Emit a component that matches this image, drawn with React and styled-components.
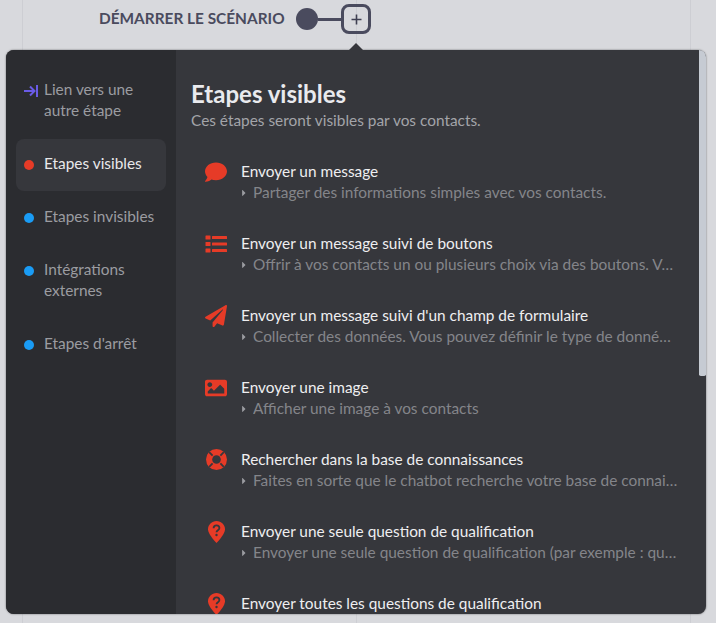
import React from 'react';
import styled, { createGlobalStyle } from 'styled-components';
import { FaComment, FaPaperPlane, FaImage, FaCaretRight } from 'react-icons/fa';

const GlobalStyle = createGlobalStyle`
  html, body {
    margin: 0;
    height: 623px;
    overflow: hidden;
  }
  body {
    font-family: "Lato", "Noto Sans", sans-serif;
    background-color: #d8d9dd;
    background-image: linear-gradient(90deg, #cdced3 1px, transparent 1px);
    background-size: 334px 100%;
    background-position: 22px 0;
  }
`;

const Page = styled.div`
  height: 623px;
  display: flex;
  flex-direction: column;
  padding: 4px 10px 9px 6px;
  box-sizing: border-box;
`;

const StartBar = styled.div`
  display: flex;
  align-items: center;
  height: 30px;
  padding-left: 93px;
  margin-bottom: 16px;
`;

const StartLabel = styled.span`
  width: 190px;
  font-size: 15.4px;
  font-weight: 700;
  color: #4a4b5e;
  white-space: nowrap;
  position: relative;
  top: -1px;
`;

const StartDot = styled.span`
  width: 22px;
  height: 22px;
  border-radius: 50%;
  background: #4a4b5e;
  margin-left: 7px;
`;

const Connector = styled.span`
  width: 23px;
  height: 3px;
  background: #4a4b5e;
`;

const AddButton = styled.span`
  width: 30px;
  height: 30px;
  box-sizing: border-box;
  border: 3px solid #4a4b5e;
  border-radius: 8px;
  display: flex;
  align-items: center;
  justify-content: center;
  color: #3f4052;
`;

const Panel = styled.div`
  position: relative;
  flex: 1;
  min-height: 0;
  display: flex;
  border-radius: 8px;
  background: #36373c;
  box-shadow: 0 0 2px rgba(0, 0, 0, 0.55);
`;

const Caret = styled.span`
  position: absolute;
  left: 343px;
  top: -7px;
  width: 0;
  height: 0;
  border-left: 7px solid transparent;
  border-right: 7px solid transparent;
  border-bottom: 7px solid #36373c;
`;

const Sidebar = styled.nav`
  width: 170px;
  flex: none;
  box-sizing: border-box;
  padding: 15px 10px;
  display: flex;
  flex-direction: column;
  gap: 1px;
  background: #2b2c30;
  border-radius: 8px 0 0 8px;
`;

const SideItem = styled.div`
  display: flex;
  align-items: flex-start;
  padding: 14px 8px 17px;
  border-radius: 8px;
  font-size: 15.4px;
  line-height: 21px;
  color: ${(props) => (props.$active ? '#e8e8ea' : '#9b9ca1')};
  background: ${(props) => (props.$active ? '#36373c' : 'transparent')};
`;

const SideMark = styled.span`
  width: 20px;
  height: 21px;
  flex: none;
  display: flex;
  align-items: center;
  position: relative;
  top: 1px;
`;

const Dot = styled.span`
  width: 10px;
  height: 10px;
  border-radius: 50%;
  background: ${(props) => props.$color};
`;

const Content = styled.main`
  flex: 1;
  min-width: 0;
  padding: 29px 28px 0 15px;
  overflow: hidden;
  border-radius: 0 8px 8px 0;
`;

const Title = styled.h1`
  margin: 0;
  font-size: 24px;
  line-height: 30px;
  font-weight: 700;
  color: #e9eaee;
`;

const Subtitle = styled.p`
  margin: 1px 0 30px;
  font-size: 15.4px;
  line-height: 21px;
  color: #a3a4a9;
`;

const StepList = styled.div`
  display: flex;
  flex-direction: column;
  gap: 30px;
  padding-left: 14px;
`;

const Step = styled.div`
  display: flex;
  gap: 14px;
`;

const StepIcon = styled.span`
  width: 22px;
  height: 21px;
  flex: none;
  display: flex;
  align-items: center;
  justify-content: center;
  color: #e63b27;
`;

const StepText = styled.div`
  flex: 1;
  min-width: 0;
`;

const StepName = styled.div`
  font-size: 15.4px;
  line-height: 21px;
  color: #eeeef0;
  white-space: nowrap;
`;

const StepHint = styled.div`
  display: flex;
  align-items: center;
  font-size: 15.4px;
  line-height: 21px;
  color: #84858a;
`;

const HintArrow = styled(FaCaretRight)`
  width: 6px;
  height: 10px;
  flex: none;
  margin-right: 6px;
  color: #9b9ca1;
`;

const HintLabel = styled.span`
  white-space: nowrap;
  overflow: hidden;
  text-overflow: ellipsis;
`;

const ScrollThumb = styled.span`
  position: absolute;
  top: 0;
  right: 0;
  width: 7px;
  height: 326px;
  background: #c6cbd3;
  border-radius: 0 8px 2px 2px;
`;

const PlusIcon = () => (
  <svg width="11" height="11" viewBox="0 0 11 11">
    <path d="M5.500 0.500v10M0.500 5.500h10" stroke="currentColor" strokeWidth="1.600" />
  </svg>
);

const LinkIcon = () => (
  <svg width="14" height="12" viewBox="0 0 14 12" fill="none" stroke="#6a5be6" strokeWidth="2">
    <path d="M0 6h10M6 1.500 10.500 6 6 10.500" />
    <path d="M13 0v12" />
  </svg>
);

const ListIcon = () => (
  <svg width="22" height="18" viewBox="0 0 22 18" fill="currentColor">
    <rect x="0.500" y="0.500" width="5" height="4" rx="0.500" />
    <rect x="0.500" y="7" width="5" height="4" rx="0.500" />
    <rect x="0.500" y="13.500" width="5" height="4" rx="0.500" />
    <rect x="7" y="1" width="15" height="3" rx="0.500" />
    <rect x="7" y="7.500" width="15" height="3" rx="0.500" />
    <rect x="7" y="14" width="15" height="3" rx="0.500" />
  </svg>
);

const RingIcon = () => (
  <svg width="21" height="21" viewBox="0 0 21 21">
    <circle cx="10.500" cy="10.500" r="10.500" fill="currentColor" />
    <circle cx="10.500" cy="10.500" r="4.300" fill="#36373c" />
    <path
      d="M3.200 3.200l3.400 3.400M17.800 3.200l-3.400 3.400M3.200 17.800l3.400-3.400M17.800 17.800l-3.400-3.400"
      stroke="#36373c"
      strokeWidth="1.800"
    />
  </svg>
);

const QuestionPin = () => (
  <svg width="17" height="22" viewBox="0 0 17 22">
    <path
      d="M8.500 0C3.800 0 0 3.700 0 8.200c0 4.400 5.600 10.600 8.500 13.800 2.900-3.200 8.500-9.400 8.500-13.800C17 3.700 13.200 0 8.500 0z"
      fill="#e63b27"
    />
    <path
      d="M5.600 7.200c0-1.700 1.300-2.800 2.900-2.800s2.900 1 2.900 2.600c0 2.100-2.900 2.200-2.900 4.200"
      fill="none"
      stroke="#36373c"
      strokeWidth="1.800"
    />
    <circle cx="8.500" cy="14" r="1.200" fill="#36373c" />
  </svg>
);

const sideItems = [
  { label: <>Lien vers une<br />autre étape</>, mark: <LinkIcon /> },
  { label: 'Etapes visibles', mark: <Dot $color="#e63b27" />, active: true },
  { label: 'Etapes invisibles', mark: <Dot $color="#1a9cf5" /> },
  { label: <>Intégrations<br />externes</>, mark: <Dot $color="#1a9cf5" /> },
  { label: "Etapes d'arrêt", mark: <Dot $color="#1a9cf5" /> },
];

const steps = [
  {
    icon: <FaComment size={22} />,
    name: 'Envoyer un message',
    hint: 'Partager des informations simples avec vos contacts.',
  },
  {
    icon: <ListIcon />,
    name: 'Envoyer un message suivi de boutons',
    hint: 'Offrir à vos contacts un ou plusieurs choix via des boutons. Vous pouvez ajouter plusieurs boutons',
  },
  {
    icon: <FaPaperPlane size={22} />,
    name: "Envoyer un message suivi d'un champ de formulaire",
    hint: 'Collecter des données. Vous pouvez définir le type de données à collecter dans le formulaire',
  },
  {
    icon: <FaImage size={22} />,
    name: 'Envoyer une image',
    hint: 'Afficher une image à vos contacts',
  },
  {
    icon: <RingIcon />,
    name: 'Rechercher dans la base de connaissances',
    hint: 'Faites en sorte que le chatbot recherche votre base de connaissances pour répondre',
  },
  {
    icon: <QuestionPin />,
    name: 'Envoyer une seule question de qualification',
    hint: 'Envoyer une seule question de qualification (par exemple : quel est votre budget ?)',
  },
  {
    icon: <QuestionPin />,
    name: 'Envoyer toutes les questions de qualification',
    hint: 'Envoyer toutes les questions de qualification à vos contacts',
  },
];

export default function App() {
  return (
    <Page>
      <GlobalStyle />
      <StartBar>
        <StartLabel>DÉMARRER LE SCÉNARIO</StartLabel>
        <StartDot />
        <Connector />
        <AddButton><PlusIcon /></AddButton>
      </StartBar>
      <Panel>
        <Caret />
        <Sidebar>
          {sideItems.map((item, index) => (
            <SideItem key={index} $active={item.active}>
              <SideMark>{item.mark}</SideMark>
              <span>{item.label}</span>
            </SideItem>
          ))}
        </Sidebar>
        <Content>
          <Title>Etapes visibles</Title>
          <Subtitle>Ces étapes seront visibles par vos contacts.</Subtitle>
          <StepList>
            {steps.map((step) => (
              <Step key={step.name}>
                <StepIcon>{step.icon}</StepIcon>
                <StepText>
                  <StepName>{step.name}</StepName>
                  <StepHint>
                    <HintArrow />
                    <HintLabel>{step.hint}</HintLabel>
                  </StepHint>
                </StepText>
              </Step>
            ))}
          </StepList>
        </Content>
        <ScrollThumb />
      </Panel>
    </Page>
  );
}
